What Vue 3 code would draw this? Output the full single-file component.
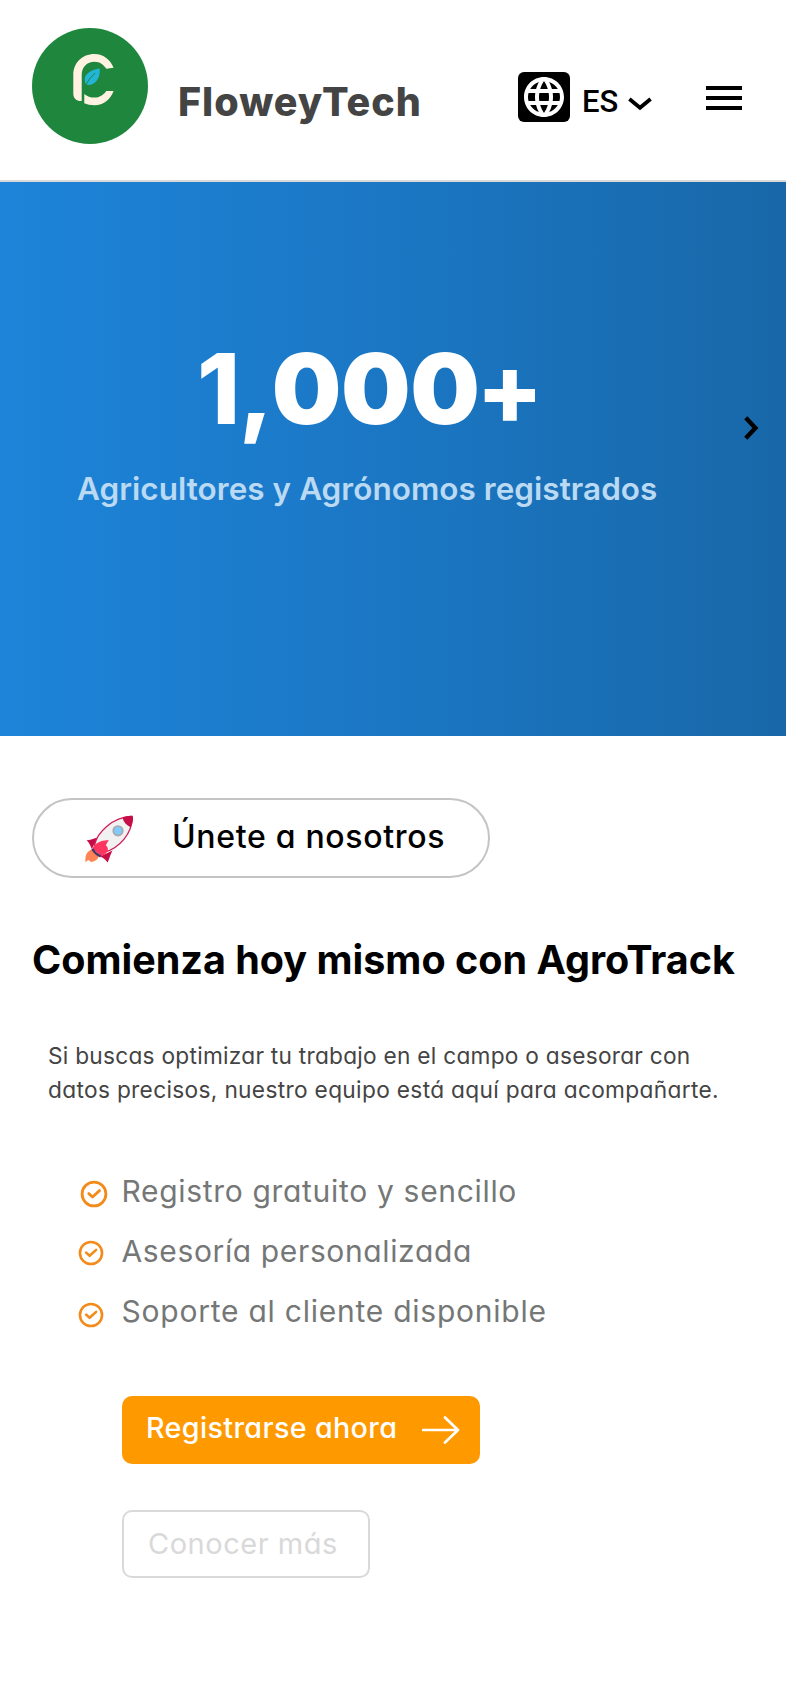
<script setup>
const benefits = [
  { text: 'Registro gratuito y sencillo', size: 28, kind: 'first' },
  { text: 'Asesoría personalizada', size: 26, kind: 'second' },
  { text: 'Soporte al cliente disponible', size: 26, kind: 'third' },
]
</script>

<template>
  <div class="page">
    <header class="header">
      <svg class="logo" viewBox="32 28 116 116" aria-hidden="true">
        <circle cx="90" cy="86" r="58" fill="#1f873d" />
        <path fill="#fff2e1" d="M81.7 101V75C81.7 67 87 61.7 94.5 61.7C100 61.7 103.5 64.5 106.3 68.8L113.6 67.8C110.5 60 103.5 54 94.5 54C82 54 73.3 63 73.3 75V93.5C73.3 98.5 77 101.5 81.7 101Z" />
        <path fill="#fff2e1" d="M84.3 94C87 96.5 90.5 97.6 94.5 97.6C99.5 97.6 103.5 95 106.3 91H113.6C110.5 99.5 103.5 105.2 94.5 105.2C90.5 105.2 87 104.5 84.3 103.2Z" />
        <path fill="#22b5d6" d="M99.7 68.4C92 69.2 84 74 84.8 80C85 82 85.2 83.3 86 84.6C94 86.5 100.8 79 99.7 68.4Z" />
        <path fill="none" stroke="#1f873d" stroke-width="1" stroke-linecap="round" d="M86 84.8C88 80.5 91 76.5 95 73.4" />
      </svg>
      <span class="brand">FloweyTech</span>
      <div class="lang">
        <svg class="globe" viewBox="0 0 52 50" aria-hidden="true">
          <rect width="52" height="50" rx="6" />
          <path transform="translate(2 1)" fill="#fff" d="M23.98 4C12.94 4 4 12.96 4 24s8.94 20 19.98 20C35.04 44 44 35.04 44 24S35.04 4 23.98 4zm13.86 12h-5.9c-.64-2.5-1.56-4.9-2.76-7.12 3.68 1.26 6.74 3.82 8.66 7.12zM24 8.08c1.66 2.4 2.96 5.06 3.82 7.92h-7.64c.86-2.86 2.16-5.52 3.82-7.92zM8.52 28C8.2 26.72 8 25.38 8 24s.2-2.72.52-4h6.76c-.16 1.32-.28 2.64-.28 4s.12 2.68.28 4H8.52zm1.64 4h5.9c.64 2.5 1.56 4.9 2.76 7.12-3.68-1.26-6.74-3.8-8.66-7.12zm5.9-16h-5.9c1.92-3.32 4.98-5.86 8.66-7.12-1.2 2.22-2.12 4.62-2.76 7.12zM24 39.92c-1.66-2.4-2.96-5.06-3.82-7.92h7.64c-.86 2.86-2.16 5.52-3.82 7.92zM28.68 28h-9.36c-.18-1.32-.32-2.64-.32-4s.14-2.7.32-4h9.36c.18 1.3.32 2.64.32 4s-.14 2.68-.32 4zm.5 11.12c1.2-2.22 2.12-4.62 2.76-7.12h5.9c-1.92 3.3-4.98 5.86-8.66 7.12zM32.72 28c.16-1.32.28-2.64.28-4s-.12-2.68-.28-4h6.76c.32 1.28.52 2.62.52 4s-.2 2.72-.52 4h-6.76z" />
        </svg>
        <span class="code">ES</span>
        <svg class="caret" viewBox="0 0 24 14" aria-hidden="true">
          <path d="M1.4 2L12 10.8L22.6 2" fill="none" stroke="#000" stroke-width="3.8" />
        </svg>
      </div>
      <svg class="menu" viewBox="0 0 36 24" aria-hidden="true">
        <path d="M0 0h36v4H0zM0 10h36v4H0zM0 20h36v4H0z" />
      </svg>
    </header>

    <section class="hero">
      <div class="stat">
        <p class="number"><span class="lead">1,</span><span class="zeros">000</span><span class="plus">+</span></p>
        <p class="label">Agricultores y Agrónomos registrados</p>
      </div>
      <svg class="next" viewBox="0 0 15 24" aria-hidden="true">
        <path d="M1.8 1.8L11.4 12L1.8 22.2" fill="none" stroke="#000" stroke-width="4.4" />
      </svg>
    </section>

    <main class="content">
      <div class="pill">
        <svg class="rocket" viewBox="85 815 48 48" aria-hidden="true">
          <path fill="#ff8354" d="M92.2 849.5C87 850.5 84.6 856 85.6 862.4C87.5 860 89 859.6 90.4 861.9C94 862 97.5 860 98.6 857Z" />
          <path fill="#c70d48" d="M97.8 837.4C94 838.5 90 840 86.6 840.2C89 842.5 90.5 845.5 91.8 849Z" />
          <path fill="#c70d48" d="M112.6 850.5C110.5 854 109.5 858.5 107.6 862.5C105.5 859.5 103 857.5 100 856.5Z" />
          <path fill="#f1f1f1" stroke="#cf1c54" stroke-width="1.3" d="M94.5 845C97 833 112 817 131.8 816.4C133.5 832 119.5 848.5 103.5 852.5Z" />
          <path fill="#c70d48" d="M122.5 817.8C126 816 130 815.4 132.6 815.9C133.8 818.5 132.5 824 130.6 827.3C126.5 825.5 123.5 822 122.5 817.8Z" />
          <path fill="#fd355f" d="M108.8 840C104 840.5 97 840.5 92.3 848.5L101.5 856.3C108 853 109.8 848.5 105.8 845.2Z" />
          <path fill="none" stroke="#4e3566" stroke-width="2.4" d="M92.3 848.8C94.5 852.5 97 854.8 100.8 856.3" />
          <circle cx="118" cy="830.8" r="4.7" fill="#80caff" stroke="#a7a9ac" stroke-width="1.8" />
        </svg>
        <span class="pill-text">Únete a nosotros</span>
      </div>

      <h1 class="title">Comienza hoy mismo con AgroTrack</h1>
      <p class="intro">
        <span class="line one">Si buscas optimizar tu trabajo en el campo o asesorar con</span>
        <span class="line two">datos precisos, nuestro equipo está aquí para acompañarte.</span>
      </p>

      <ul class="benefits">
        <li v-for="b in benefits" :key="b.text" :class="b.kind">
          <span class="mark">
            <svg :width="b.size" :height="b.size" viewBox="0 0 28 28" aria-hidden="true">
              <g fill="none" stroke="#f28b1a" stroke-width="2.8" stroke-linecap="round" stroke-linejoin="round">
                <circle cx="14" cy="14" r="11.9" />
                <path d="M8.8 13.6L12.5 17L19.5 10.6" />
              </g>
            </svg>
          </span>
          <span class="benefit">{{ b.text }}</span>
        </li>
      </ul>

      <div class="actions">
        <button class="btn primary">
          <span>Registrarse ahora</span>
          <svg class="arrow" viewBox="0 0 38 28" aria-hidden="true">
            <path d="M1.2 14H36M23 1.5L36 14L23 26.5" fill="none" stroke="#fff" stroke-width="2.7" stroke-linecap="round" stroke-linejoin="round" />
          </svg>
        </button>
        <button class="btn secondary">Conocer más</button>
      </div>
    </main>
  </div>
</template>

<style>
body { background: #fff; }
</style>

<style scoped>
.page {
  width: 786px;
  height: 1704px;
  background: #fff;
  overflow: hidden;
  font-family: Inter, "Liberation Sans", sans-serif;
  color: #000;
}
p, h1, ul { margin: 0; padding: 0; }
svg { display: block; flex: none; }

.header {
  box-sizing: border-box;
  height: 182px;
  padding: 28px 44px 0 32px;
  border-bottom: 2px solid #d9d9d9;
  display: flex;
  align-items: flex-start;
}
.logo { width: 116px; height: 116px; }
.brand {
  margin: 50px 0 0 30px;
  font-size: 39.5px;
  line-height: 48px;
  font-weight: 800;
  letter-spacing: 0.98px;
  color: #444;
  font-feature-settings: "cv11";
}
.lang { display: flex; align-items: flex-start; margin: 44px 0 0 auto; }
.globe { width: 52px; height: 50px; }
.code {
  width: 46px;
  margin: 10px 0 0 12px;
  font: 500 31px/40px Roboto, sans-serif;
}
.caret { width: 24px; height: 14px; margin-top: 25px; }
.menu { width: 36px; height: 24px; margin: 58px 0 0 54px; }

.hero {
  box-sizing: border-box;
  height: 554px;
  padding: 147px 27.5px 0 77px;
  display: flex;
  justify-content: space-between;
  background: linear-gradient(90deg, #1d84d9 0%, #1b78c6 45%, #1868a8 100%);
}
.number {
  display: flex;
  margin-left: 120px;
  font-size: 98px;
  line-height: 120px;
  font-weight: 800;
  color: #fff;
  font-feature-settings: "calt" 0;
}
.lead { letter-spacing: -1.5px; }
.zeros { font-weight: 900; letter-spacing: -0.5px; }
.plus { margin-left: -3px; }
.label {
  margin-top: 20px;
  font-size: 31.5px;
  line-height: 40px;
  font-weight: 600;
  letter-spacing: 0.03px;
  color: #bad9f2;
  white-space: nowrap;
}
.next { width: 15px; height: 24px; margin-top: 87px; }

.content { padding: 62px 32px 0; }
.pill {
  box-sizing: border-box;
  width: 458px;
  height: 80px;
  padding: 0 0 2px 51px;
  border: 2px solid #c4c4c4;
  border-radius: 40px;
  display: flex;
  align-items: center;
}
.rocket { width: 48px; height: 48px; margin-top: 4px; }
.pill-text {
  margin-left: 39px;
  font-size: 32px;
  line-height: 40px;
  font-weight: 500;
  letter-spacing: 0.68px;
  white-space: nowrap;
  font-feature-settings: "cv11";
}
.title {
  margin-top: 57.6px;
  font-size: 39.5px;
  line-height: 48px;
  font-weight: 700;
  white-space: nowrap;
}
.intro {
  margin: 55.4px 0 0 16px;
  font-size: 22.7px;
  line-height: 34px;
  color: #444;
  font-feature-settings: "cv11";
}
.line { display: block; white-space: nowrap; }
.one { letter-spacing: 0.255px; }
.two { letter-spacing: 0.327px; }

.benefits { margin-top: 54.5px; list-style: none; }
.benefits li { display: flex; align-items: center; height: 60px; }
.mark { width: 89.5px; box-sizing: border-box; }
.first .mark { padding: 5px 0 0 48px; }
.second .mark { padding: 3px 0 0 46px; }
.third .mark { padding: 7px 0 0 46px; }
.benefit {
  padding-top: 1px;
  font-size: 30px;
  line-height: 59px;
  color: #757777;
  white-space: nowrap;
  font-feature-settings: "cv11";
}
.first .benefit { letter-spacing: 0.68px; }
.second .benefit { letter-spacing: 0.63px; }
.third .benefit { letter-spacing: 0.76px; }

.actions {
  margin: 54.5px 0 0 90px;
  display: flex;
  flex-direction: column;
  align-items: flex-start;
  gap: 46px;
}
.btn {
  box-sizing: border-box;
  height: 68px;
  margin: 0;
  border-radius: 10px;
  font-family: inherit;
  line-height: 40px;
  font-feature-settings: "cv11";
  white-space: nowrap;
  display: flex;
  align-items: center;
}
.primary {
  width: 358px;
  padding: 0 20px 0 24px;
  border: 0;
  justify-content: space-between;
  background: #ff9900;
  color: #fff;
  font-size: 28.7px;
  font-weight: 500;
  letter-spacing: 0.36px;
}
.primary span { margin-top: -3px; }
.arrow { width: 38px; height: 28px; }
.secondary {
  width: 248px;
  padding: 0 0 0 24px;
  border: 2px solid #d9d9d9;
  background: #fff;
  color: #d9d9d9;
  font-size: 29px;
  letter-spacing: 0.52px;
}
</style>
